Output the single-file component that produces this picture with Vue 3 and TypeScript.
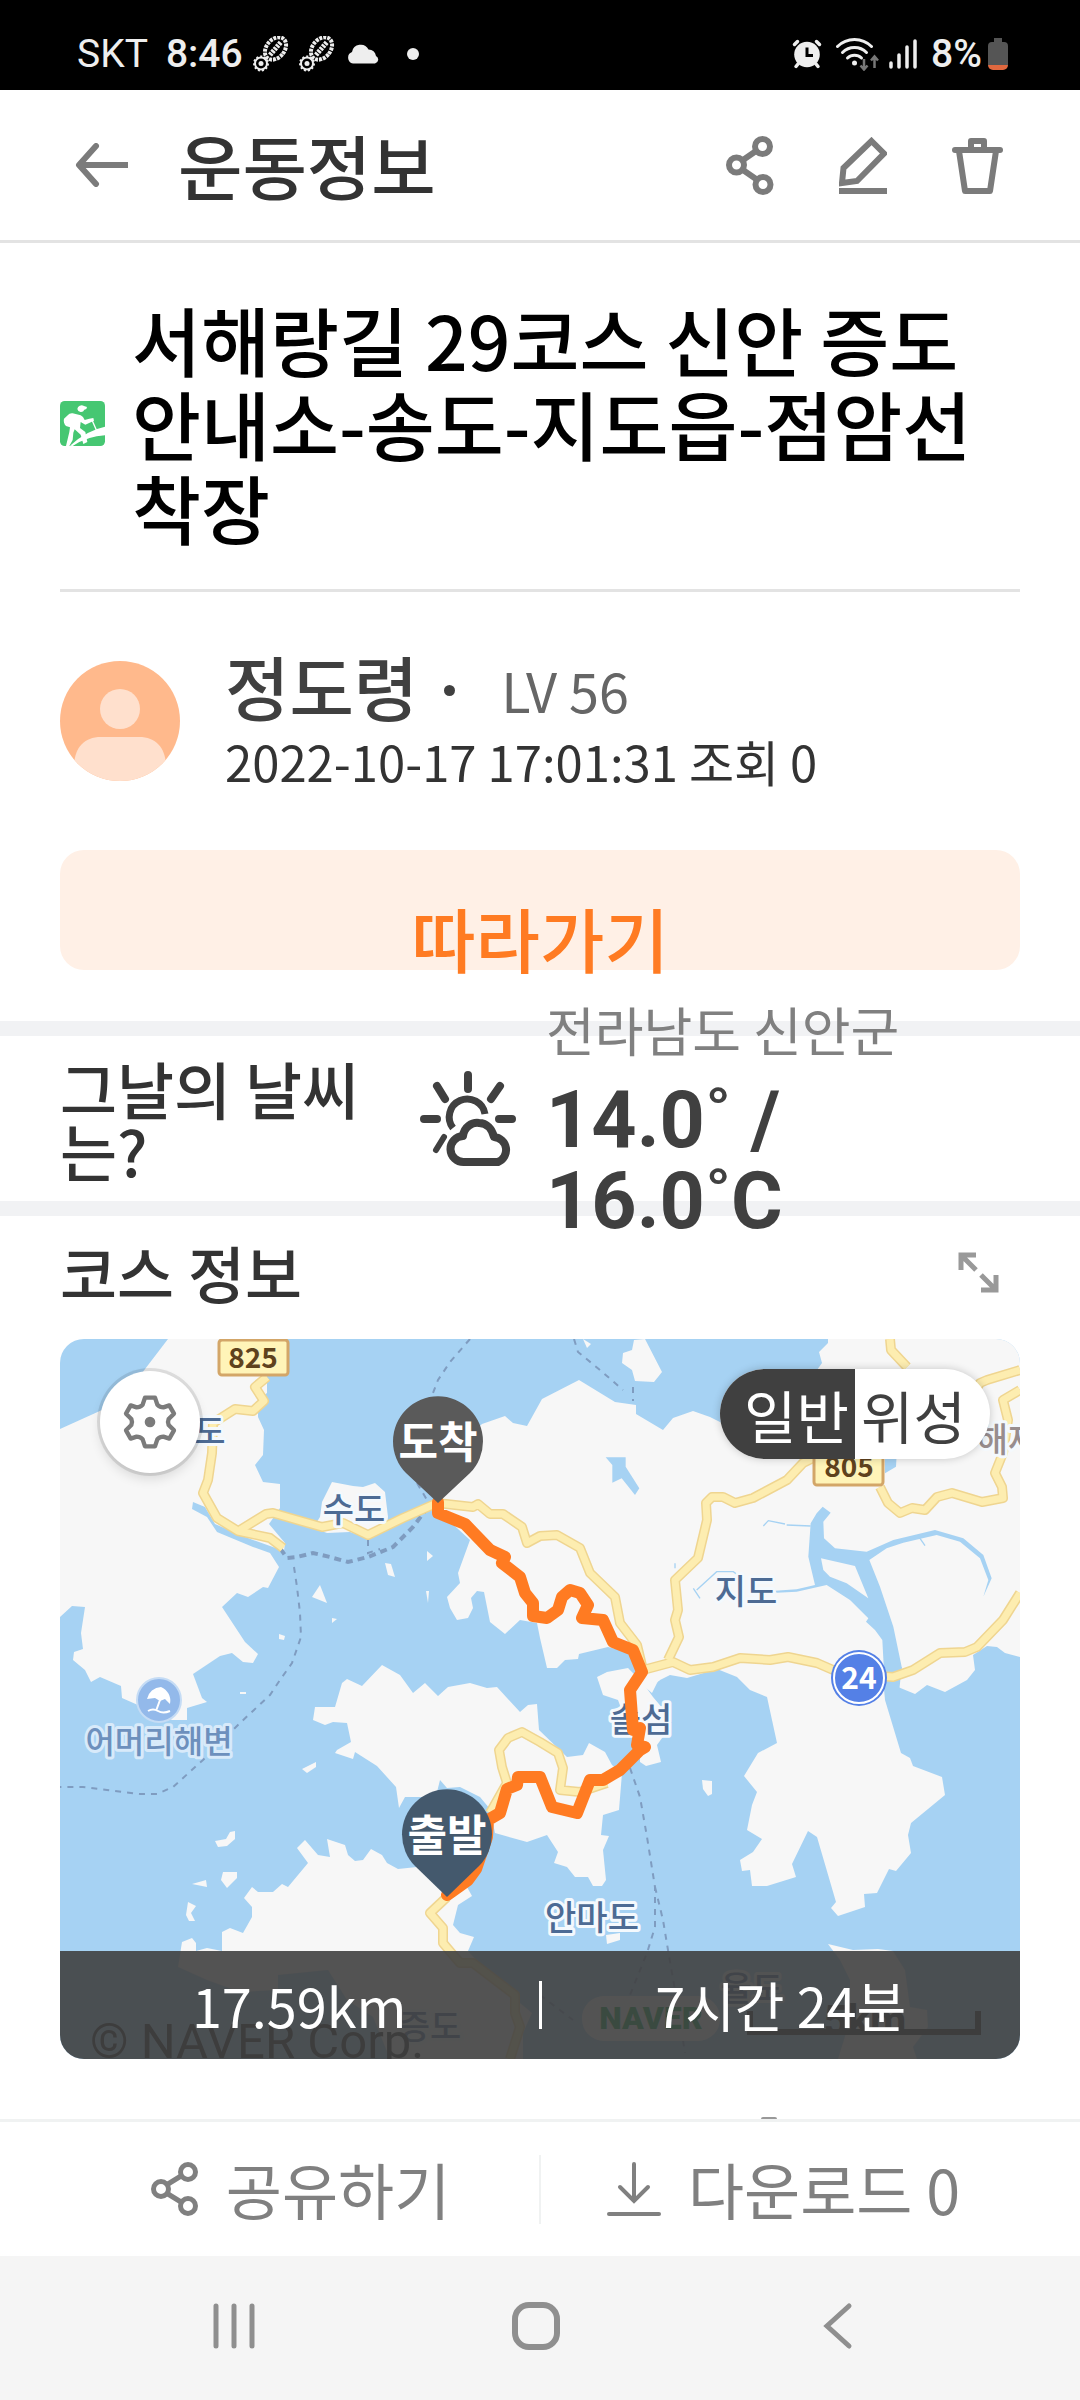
<script setup lang="ts">
import { ref } from 'vue'

interface MapLabel {
  text: string
  x: number
  y: number
  kind?: string
}

const mapMode = ref<'normal' | 'satellite'>('normal')

const land: string[] = [
  '108,0 207,0 207,54 198,61 198,78 204,91 203,116 195,126 203,143 220,145 220,169 209,185 225,204 224,212 193,201 178,195 155,185 145,168 133,163 132,170 147,178 157,193 193,208 210,214 219,228 208,249 203,248 188,258 177,254 162,268 185,303 198,315 193,324 183,323 172,314 160,317 133,335 142,359 147,363 127,369 127,381 112,381 62,359 61,347 40,338 31,343 25,331 13,321 14,313 23,310 21,294 25,268 12,267 0,278 0,90 42,71 82,34',
  '272,143 293,147 303,148 315,144 325,153 328,178 327,185 308,199 290,193 267,194 253,189 260,178 262,163',
  '574,1 585,0 602,33 594,43 575,42 572,31 562,24 563,14 572,11',
  '523,0 531,5 527,9',
  '960,0 768,0 768,4 759,13 762,24 757,31 662,84 650,78 633,72 613,79 603,91 576,75 576,66 555,63 519,41 482,60 467,87 453,84 445,77 422,85 395,110 378,163 385,178 410,201 398,234 400,244 387,258 390,269 397,281 408,279 413,269 411,259 417,252 424,253 430,283 445,295 460,281 477,284 480,299 487,329 497,329 505,321 518,320 519,315 548,308 572,314 580,344 592,354 598,342 610,336 627,339 657,330 677,338 690,351 707,358 717,404 698,414 684,437 697,453 692,466 687,491 702,500 693,513 680,521 682,532 690,531 692,547 707,547 736,538 732,525 748,492 757,498 776,563 771,569 778,577 805,568 804,555 817,554 829,530 836,532 851,514 848,496 851,484 885,456 882,438 853,427 850,419 841,414 825,361 822,328 842,328 838,348 855,355 867,346 885,353 907,341 915,331 913,316 927,307 937,308 945,314 960,318',
  '537,338 547,333 568,329 583,344 593,358 604,371 610,388 597,406 601,423 586,427 580,423 580,411 568,388 558,361 543,356',
  '590,341 600,341 595,345',
  '282,344 287,340 302,347 322,326 340,336 353,354 365,344 378,357 388,348 410,344 427,349 437,348 460,373 468,366 477,365 479,391 507,418 523,416 529,404 545,413 552,426 562,434 559,471 543,476 541,496 549,497 543,511 546,541 542,547 533,547 528,538 515,538 507,528 494,524 498,513 487,496 467,503 435,494 430,470 420,458 400,448 387,449 380,441 377,453 368,458 345,458 339,469 336,448 317,427 295,413 293,420 275,414 277,411 291,403 287,384 273,383 265,386 253,381 255,368 275,368',
  '237,509 245,501 258,516 270,518 267,500 285,506 288,516 295,522 303,521 311,510 322,516 327,524 338,530 357,528 380,541 407,548 412,557 398,566 393,586 400,594 414,598 408,612 420,625 453,658 472,674 463,694 463,720 330,720 313,678 287,661 268,631 218,636 218,651 180,653 147,641 118,628 122,603 132,599 136,604 136,612 147,609 162,612 162,593 170,589 183,594 192,578 192,568 184,559 192,548 198,553 213,553 222,545 228,548 248,524',
  '768,605 793,611 818,610 833,612 845,631 850,668 867,671 868,688 853,708 857,720 778,720 790,681 790,641 780,621',
  '155,502 166,500 170,493 175,492 175,500 167,507 158,508',
  '163,533 177,533 177,539 167,549 161,541',
  '132,545 146,541 147,548',
  '128,563 136,567 131,574 135,582 129,582 126,576',
  '242,430 256,423 256,428 247,434',
  '325,224 331,225 335,238 328,236',
  '260,246 267,264 252,258',
  '272,279 277,280 272,284',
  '219,295 225,297 224,301 219,300',
  '367,212 373,217 367,222',
  '642,441 652,442 652,455 648,457 643,450',
  '546,596 560,594 560,601 547,605',
  '180,353 186,353 186,355 180,355',
  '366,252 369,252 368,264',
]

const roads: string[] = [
  '207,38 195,48 204,62 193,72 175,70 153,84 152,114 148,141 143,154 157,179 178,192 210,199 223,209',
  '180,191 206,175 213,174 262,188 283,184 308,196 343,179 377,164 413,168 418,165 430,175 443,175 462,188 467,204 480,197 497,196 520,209 530,234 555,258 560,284 577,306 583,331 613,323 630,331 653,328 680,319 710,321 728,318 757,324 780,334 833,338 853,331 880,314 905,313 917,308 943,281 960,254',
  '608,321 619,298 615,281 618,271 615,241 638,219 647,181 646,164 652,158 663,158 675,164 693,159 727,141 743,124 763,114',
  '820,148 828,164 840,174 852,169 865,171 877,158 892,154 922,163 943,159 942,148 935,134 943,114 948,81 943,61 960,51',
  '830,0 831,11 847,28',
  '910,60 920,44 927,41 960,31',
  '430,474 447,444 442,428 439,411 448,399 462,393 480,403 498,414 503,429 500,451 520,453 547,444',
  '387,558 370,574 383,589 383,604 400,624 413,624 455,656 455,674 460,688 450,720',
]

const ferries: string[] = [
  '410,0 390,23 378,41 373,54',
  '357,144 367,161 372,164',
  '234,228 237,248 240,274 241,298 232,324 220,341 210,356 180,384 143,421 113,448 97,455 80,455 47,451 23,448 0,448',
  '514,0 518,13 540,31 563,51',
  '573,48 573,62',
  '308,201 308,214 320,210',
  '570,429 580,458 587,498 595,548 595,588 587,614 570,656',
  '595,548 603,581 608,611 615,651 625,714',
  '480,656 513,681',
]

const route =
  '378,163 378,174 405,185 430,211 445,218 442,224 460,238 465,254 473,264 473,277 487,279 498,271 502,258 510,251 520,254 528,266 522,279 543,281 553,303 573,311 582,333 570,351 573,391 580,389 577,406 585,408 580,411 560,431 543,441 530,441 517,474 492,468 480,438 458,438 457,446 447,450 440,474 428,481 427,498 416,530 408,541 387,556'

const labels: MapLabel[] = [
  { text: '도', x: 150, y: 105 },
  { text: '수도', x: 294, y: 183 },
  { text: '지도', x: 686, y: 265 },
  { text: '솔섬', x: 581, y: 393 },
  { text: '안마도', x: 532, y: 591 },
  { text: '증도', x: 370, y: 700 },
  { text: '율도', x: 692, y: 662 },
  { text: '해제', x: 948, y: 113, kind: 'town' },
  { text: '어머리해변', x: 99, y: 414, kind: 'beach' },
]
</script>

<template>
  <div class="page">
    <div class="status">
      <span class="carrier">SKT</span>
      <span class="clock">8:46</span>
      <svg v-for="n in 2" :key="n" class="foot" width="36" height="36" viewBox="0 0 36 36">
        <g fill="none" stroke="#eee">
          <ellipse cx="22.500" cy="12.500" rx="9" ry="12.500" transform="rotate(40 22.500 12.500)" stroke-width="4" stroke-dasharray="3 1" />
          <path d="M17 19L28 6" stroke-width="5" stroke-dasharray="2.500 1" />
          <circle cx="8" cy="27.500" r="6" stroke-width="2" />
          <circle cx="8" cy="27.500" r="7" stroke-width="2" stroke-dasharray="2 2" />
        </g>
        <circle cx="8" cy="27.500" r="2.500" fill="#eee" />
      </svg>
      <svg class="cloud" width="32" height="20" viewBox="0 0 32 20">
        <path d="M6 19.500a6 6 0 0 1-1-11.500 8.800 8.800 0 0 1 16.500-2.500A8 8 0 0 1 29 12a4 4 0 0 1-1 7.500z" fill="#eee" />
      </svg>
      <span class="dot"></span>
      <span class="grow"></span>
      <svg class="alarm" width="30" height="30" viewBox="0 0 30 30">
        <circle cx="15" cy="15.500" r="12.800" fill="#eee" />
        <g stroke="#eee" stroke-width="3.500" stroke-linecap="round">
          <path d="M2.500 5.500l3-3M27.500 5.500l-3-3M6 25l-2 2.500M24 25l2 2.500" />
        </g>
        <path d="M15 8.500v8h6" fill="none" stroke="#000" stroke-width="3" />
      </svg>
      <svg class="wifi" width="44" height="34" viewBox="0 0 44 34">
        <g fill="none" stroke="#eee" stroke-width="3" stroke-linecap="round">
          <path d="M1.500 9.500a24 24 0 0 1 34 0" />
          <path d="M6.500 15.500a17 17 0 0 1 24 0" />
          <path d="M11.500 21a10 10 0 0 1 14 0" />
        </g>
        <circle cx="18.500" cy="26" r="2.500" fill="#eee" />
        <path d="M28 22v10M24.500 28.500l3.500 4 3.500-4M38.500 31V20M35 23.500l3.500-4 3.500 4" fill="none" stroke="#777" stroke-width="2.500" />
      </svg>
      <svg class="signal" width="28" height="30" viewBox="0 0 28 30">
        <path d="M2 24v4M10 16v12M18 8v20M26 2v26" stroke="#eee" stroke-width="3.500" stroke-linecap="round" />
      </svg>
      <span class="percent">8%</span>
      <svg class="battery" width="20" height="32" viewBox="0 0 20 32">
        <path d="M6 0h8v4h2a4 4 0 0 1 4 4v19H0V8a4 4 0 0 1 4-4h2z" fill="#555" />
        <path d="M0 27h20a5 5 0 0 1-5 5H5a5 5 0 0 1-5-5z" fill="#e0683f" />
      </svg>
    </div>

    <header class="bar">
      <button class="icon-button" type="button" aria-label="뒤로">
        <svg width="53" height="44" viewBox="0 0 53 44" fill="none" stroke="#7b7b7b" stroke-width="6">
          <path d="M21 3L4 22l17 19" stroke-linecap="round" stroke-linejoin="round" />
          <path d="M4 22h49" />
        </svg>
      </button>
      <h1>운동정보</h1>
      <button class="icon-button" type="button" aria-label="공유">
        <svg width="48" height="59" viewBox="0 0 48 59" fill="none" stroke="#7b7b7b" stroke-width="6">
          <circle cx="36.500" cy="10.500" r="7.500" />
          <circle cx="10.500" cy="29" r="7.500" />
          <circle cx="37" cy="48.500" r="7.500" />
          <path d="M17 24l13-9M17 34l13 9" />
        </svg>
      </button>
      <button class="icon-button edit" type="button" aria-label="수정">
        <svg width="48" height="57" viewBox="0 0 48 57" fill="none" stroke="#7b7b7b" stroke-width="6">
          <path d="M32.500 4L45 16.500 18 44l-15 2 1.500-15z" />
          <path d="M0 54h48" />
        </svg>
      </button>
      <button class="icon-button trash" type="button" aria-label="삭제">
        <svg width="51" height="57" viewBox="0 0 51 57" fill="none" stroke="#7b7b7b" stroke-width="6" stroke-linejoin="round">
          <path d="M3 13h45" stroke-linecap="round" />
          <path d="M19 12V4h13v8" />
          <path d="M7 14l6 40h25l6-40" />
        </svg>
      </button>
    </header>

    <main>
      <section class="summary">
        <div class="course-title">
          <svg class="hike" width="45" height="45" viewBox="0 0 135 135">
            <rect width="135" height="135" rx="14" fill="#46c772" />
            <g fill="#fff">
              <path d="M52 24a13 12 0 0 1 20-9l9 3-2 6-6 2a11 11 0 0 1-21-2z" />
              <path d="M24 42q4-6 14-5l24 6q8 3 12 14l14-4 12-2 2 8-26 12-14-8-2 18 16 12 6 30-12 6-8-28-18-16-4 10-2 22-10 18h-10l10-42 2-14-12-4q-9-10-6-22z" />
              <path d="M30 134q50-46 105-57v26q-50 2-97 32z" />
            </g>
            <path d="M95 55l15 34" stroke="#fff" stroke-width="4" />
          </svg>
          <h2>서해랑길 29코스 신안 증도 안내소-송도-지도읍-점암선착장</h2>
        </div>
        <div class="author">
          <svg class="avatar" width="120" height="120" viewBox="0 0 120 120">
            <clipPath id="avatar-clip"><circle cx="60" cy="60" r="60" /></clipPath>
            <g clip-path="url(#avatar-clip)">
              <rect width="120" height="120" fill="#ffb98c" />
              <circle cx="60" cy="48" r="20" fill="#ffe0cd" />
              <path d="M14 106c0-18 9-30 27-30h38c18 0 27 12 27 30v14H14z" fill="#ffe0cd" />
            </g>
          </svg>
          <div class="author-text">
            <div class="author-line"><strong>정도령</strong><i></i><span>LV 56</span></div>
            <div class="date">2022-10-17 17:01:31 조회 0</div>
          </div>
        </div>
        <button class="follow" type="button">따라가기</button>
      </section>

      <section class="weather">
        <h3>그날의 날씨는?</h3>
        <svg class="sun" width="96" height="96" viewBox="0 0 96 96" fill="none" stroke="#404040" stroke-width="8" stroke-linecap="round" stroke-linejoin="round">
          <path d="M48 4v14M17 15l8 13M80 15l-9 13M4 48h13M79 48h13" />
          <path d="M24 66l-8 13" stroke-width="6" />
          <path d="M33 57A18 18 0 1 1 65 43" stroke-width="7" stroke-linecap="butt" />
          <path d="M44 91a13 13 0 0 1-1-26c1-9 9-14 16-13 8 0 13 6 15 14a13 13 0 0 1 4 25z" stroke-width="8" />
        </svg>
        <div class="forecast">
          <div class="region">전라남도 신안군</div>
          <div class="temp"><span>14.0˚ /</span><span>16.0˚C</span></div>
        </div>
      </section>

      <section class="course">
        <div class="course-head">
          <h3>코스 정보</h3>
          <button class="icon-button" type="button" aria-label="지도 확대">
            <svg width="42" height="42" viewBox="0 0 42 42" fill="none" stroke="#999" stroke-width="5">
              <path d="M4 19V4h15M4 4l15 15M39 24v15H24M39 39L24 24" />
            </svg>
          </button>
        </div>

        <div class="map">
          <svg class="tiles" viewBox="0 0 960 720" preserveAspectRatio="xMidYMid slice">
            <rect width="960" height="720" fill="#a6d2f3" />
            <polygon v-for="(p, i) in land" :key="'l' + i" :points="p" fill="#f7f7f7" />
            <g transform="translate(480 -19) scale(.33333)" fill="#a6d2f3">
              <path d="M848 560L872 578 850 605 852 655 885 685 980 695 1060 660 1185 630 1270 655 1330 705 1355 775 1330 830 1345 780 1320 715 1260 665 1190 645 1090 668 1040 685 988 720 1020 800 1060 920 1085 1040 1078 1110 1035 1110 1027 960 1005 930 978 905 985 895 930 840 860 795 770 815 710 818 705 812 770 808 825 795 805 710 812 610 830 580z" />
              <path d="M843 715L945 738 985 835 920 790 870 770 850 750z" fill="#f7f7f7" />
              <path d="M197 412L257 412 257 440 298 505 285 525 245 475 217 488 217 435zM1035 405L1070 405 1068 440 1035 460z" />
              <path d="M812 618L740 615M735 612L685 602 670 618M1140 655L1155 677M405 730V745M480 835L460 805M470 810L530 755H580L600 770" fill="none" stroke="#a6d2f3" stroke-width="4" />
            </g>
            <g fill="none" stroke="#7f9cc0" stroke-width="2" stroke-dasharray="6 6">
              <polyline v-for="(p, i) in ferries" :key="'f' + i" :points="p" />
              <polyline points="368,168 353,188 333,208 308,218 288,223 270,218 253,214 237,218 227,219 220,209" stroke-width="4" stroke-dasharray="7 5" />
            </g>
            <g fill="none" stroke-linejoin="round">
              <polyline v-for="(p, i) in roads" :key="'b' + i" :points="p" stroke="#efd590" stroke-width="10" />
              <polyline v-for="(p, i) in roads" :key="'r' + i" :points="p" stroke="#fdedb0" stroke-width="7" />
            </g>
            <text v-for="l in labels" :key="l.text" class="place" :class="l.kind" :x="l.x" :y="l.y">{{ l.text }}</text>
            <g class="shield">
              <rect x="159" y="1" width="69" height="35" rx="3" />
              <text x="193" y="29">825</text>
              <rect x="754" y="111" width="69" height="35" rx="3" />
              <text x="789" y="138">805</text>
            </g>
            <circle cx="799" cy="339" r="28" fill="#5480e6" />
            <circle cx="799" cy="339" r="25" fill="none" stroke="#fff" stroke-width="2" />
            <text class="highway" x="799" y="350">24</text>
            <circle cx="99" cy="361" r="22" fill="#93b9ea" stroke="#c5dcf5" stroke-width="2" />
            <g transform="translate(99 361)" fill="#fff">
              <path d="M-12-1A15 15 0 0 1 2-13a15 15 0 0 1 9 17L6-1 1 1-4-2z" />
              <path d="M1 0l-4 11M-11 11q5-3 10 0t12 0" fill="none" stroke="#fff" stroke-width="2" />
            </g>
            <polyline :points="route" fill="none" stroke="#ff7b22" stroke-width="12" stroke-linejoin="round" stroke-linecap="round" />
            <path d="M378 164L346 134A45 45 0 1 1 410 134z" fill="#5a5a5a" />
            <text class="pin" x="378" y="119">도착</text>
            <path d="M387 558L355 527A45 45 0 1 1 419 527z" fill="#44596d" />
            <text class="pin" x="387" y="512">출발</text>
            <text class="copyright" x="30" y="719">© NAVER Corp.</text>
            <rect x="522" y="657" width="138" height="45" rx="22" fill="#fff" />
            <text class="brand" x="591" y="690">NAVER</text>
            <path d="M690 672v21h228v-21" fill="none" stroke="#222" stroke-width="6" />
            <text class="scale" x="805" y="696">5km</text>
          </svg>
          <button class="settings" type="button" aria-label="지도 설정">
            <svg width="54" height="54" viewBox="-81 -81 162 162" fill="none" stroke="#7b7b7b" stroke-width="13" stroke-linejoin="round">
              <path d="M-15-73H15L22-52Q30-44 40-44L58-50 72-25 56-9Q52 0 56 9L72 25 58 50 40 44Q30 44 22 52L15 73H-15L-22 52Q-30 44-40 44L-58 50-72 25-56 9Q-52 0-56-9L-72-25-58-50-40-44Q-30-44-22-52z" />
              <circle r="16" fill="#7b7b7b" stroke="none" />
            </svg>
          </button>
          <div class="toggle">
            <button type="button" :class="{ on: mapMode === 'normal' }" :aria-pressed="mapMode === 'normal'" @click="mapMode = 'normal'">일반</button>
            <button type="button" :class="{ on: mapMode === 'satellite' }" :aria-pressed="mapMode === 'satellite'" @click="mapMode = 'satellite'">위성</button>
          </div>
          <div class="stats">
            <span>17.59km</span>
            <i></i>
            <span>7시간 24분</span>
          </div>
        </div>
      </section>
      <div class="more"><i></i></div>
    </main>

    <footer class="actions">
      <button type="button">
        <svg width="48" height="54" viewBox="0 0 48 54" fill="none" stroke="#808080" stroke-width="5">
          <circle cx="37" cy="10" r="7.500" />
          <circle cx="10" cy="27" r="7.500" />
          <circle cx="37" cy="44" r="7.500" />
          <path d="M17 22l13-8M17 32l13 8" />
        </svg>
        <span>공유하기</span>
      </button>
      <i></i>
      <button type="button">
        <svg width="54" height="54" viewBox="0 0 54 54" fill="none" stroke="#808080" stroke-width="4" stroke-linecap="round">
          <path d="M27 2v36M13 25l14 14 14-14" />
          <path d="M2 52h50" />
        </svg>
        <span>다운로드 0</span>
      </button>
    </footer>

    <nav class="system">
      <button class="icon-button" type="button" aria-label="최근 앱">
        <svg width="48" height="48" viewBox="0 0 48 48" stroke="#8f8f8f" stroke-width="5" stroke-linecap="round">
          <path d="M6 4v40M24 4v40M42 4v40" />
        </svg>
      </button>
      <button class="icon-button" type="button" aria-label="홈">
        <svg width="48" height="48" viewBox="0 0 48 48" fill="none" stroke="#8f8f8f" stroke-width="6">
          <rect x="3" y="3" width="42" height="42" rx="14" />
        </svg>
      </button>
      <button class="icon-button" type="button" aria-label="이전">
        <svg width="48" height="48" viewBox="0 0 48 48" fill="none" stroke="#8f8f8f" stroke-width="5" stroke-linecap="round">
          <path d="M35 4L13 24l22 20" />
        </svg>
      </button>
    </nav>
  </div>
</template>

<style>
body {
  background: #fff;
}
</style>

<style scoped>
* {
  box-sizing: border-box;
}

.page {
  display: flex;
  flex-direction: column;
  min-height: 100vh;
  font-family: 'Noto Sans CJK KR', 'Noto Sans', sans-serif;
  color: #333;
}

h1,
h2,
h3 {
  margin: 0;
}

svg {
  display: block;
  flex: none;
}

button {
  margin: 0;
  padding: 0;
  border: 0;
  background: none;
  color: inherit;
  font: inherit;
}

main {
  flex: 1;
  display: flex;
  flex-direction: column;
}

.status {
  display: flex;
  align-items: center;
  height: 90px;
  padding: 18px 72px 0 77px;
  background: #000;
  color: #eee;
  font: 500 39px/44px Roboto, sans-serif;
}

.carrier {
  margin-right: 18px;
  font-weight: 400;
}

.foot {
  margin-left: 10px;
}

.cloud {
  margin-left: 12px;
}

.dot {
  width: 12px;
  height: 12px;
  margin-left: 28px;
  border-radius: 50%;
  background: #eee;
}

.grow {
  flex: 1;
}

.wifi {
  margin-left: 14px;
}

.signal {
  margin-left: 9px;
}

.percent {
  margin: 0 6px 0 14px;
}

.bar {
  display: flex;
  align-items: center;
  height: 153px;
  padding: 0 77px 0 75px;
  border-bottom: 3px solid #e3e3e3;
}

.bar h1 {
  flex: 1;
  margin-left: 50px;
  font-size: 70px;
  font-weight: 500;
  line-height: 80px;
}

.edit,
.trash {
  margin-left: 65px;
}

.summary {
  padding: 0 60px 51px;
}

.course-title {
  display: flex;
  align-items: center;
  gap: 27px;
  padding: 54px 0 40px;
  border-bottom: 3px solid #e3e3e3;
}

.course-title h2 {
  flex: 1;
  color: #000;
  font-size: 75px;
  font-weight: 500;
  line-height: 84px;
}

.author {
  display: flex;
  align-items: center;
  gap: 45px;
  padding: 54px 0;
}

.author-line {
  display: flex;
  align-items: center;
  color: #404040;
  font-size: 70px;
  line-height: 80px;
}

.author-line strong {
  font-weight: 500;
}

.author-line i {
  width: 11px;
  height: 11px;
  margin: 8px 46px 0 26px;
  border-radius: 50%;
  background: #404040;
}

.author-line span {
  padding-top: 8px;
  color: #666;
  font-size: 54px;
  line-height: 72px;
}

.date {
  font-size: 49px;
  line-height: 70px;
}

.follow {
  display: block;
  width: 100%;
  height: 120px;
  padding-top: 56px;
  border-radius: 24px;
  background: #fff0e6;
  color: #ff7b22;
  font-size: 70px;
  font-weight: 500;
  line-height: 64px;
}

.weather {
  display: flex;
  align-items: center;
  height: 195px;
  padding: 0 60px;
  border: solid #f1f2f4;
  border-width: 15px 0;
}

.weather h3 {
  width: 320px;
  font-size: 62px;
  font-weight: 500;
  line-height: 62px;
}

.sun {
  margin: 0 30px 0 40px;
}

.forecast {
  flex: 1;
}

.region {
  margin-bottom: 18px;
  color: #808080;
  font-size: 53px;
  line-height: 66px;
}

.temp {
  color: #404040;
  font: 700 79px/81px Roboto, 'Noto Sans', sans-serif;
}

.temp span {
  display: block;
}

.course {
  padding: 0 60px;
}

.course-head {
  display: flex;
  align-items: center;
  justify-content: space-between;
  height: 112px;
  margin-bottom: 11px;
  padding-right: 21px;
}

.course-head h3 {
  font-size: 62px;
  font-weight: 500;
  line-height: 62px;
}

.map {
  position: relative;
  overflow: hidden;
  aspect-ratio: 4 / 3;
  border-radius: 24px;
}

.tiles {
  width: 100%;
  height: 100%;
}

.tiles text {
  text-anchor: middle;
}

.place {
  fill: #4d6b94;
  stroke: #f4f9fd;
  stroke-width: 6px;
  stroke-linejoin: round;
  paint-order: stroke;
  font-size: 34px;
  font-weight: 500;
}

.place.town {
  fill: #988d8d;
}

.place.beach {
  fill: #6d90bd;
  stroke: #d8eafa;
  font-size: 32px;
}

.shield rect {
  fill: #fff4b8;
  stroke: #d3a668;
  stroke-width: 3px;
}

.shield text {
  fill: #5f421d;
  font-size: 28px;
  font-weight: 700;
}

.tiles .highway {
  fill: #fff;
  font-size: 30px;
  font-weight: 700;
}

.tiles .pin {
  fill: #fff;
  font-size: 43px;
  font-weight: 700;
}

.tiles .copyright {
  fill: #222;
  font: 400 49px Roboto, sans-serif;
  text-anchor: start;
}

.tiles .brand {
  fill: #00a53c;
  font: 900 32px Roboto, sans-serif;
}

.tiles .scale {
  fill: #222;
  font: 700 42px Roboto, sans-serif;
}

.settings {
  position: absolute;
  top: 32px;
  left: 40px;
  display: flex;
  align-items: center;
  justify-content: center;
  width: 100px;
  height: 102px;
  border-radius: 50%;
  background: #fff;
  box-shadow: 0 0 0 3px rgba(0, 0, 0, 0.1), 0 6px 12px rgba(0, 0, 0, 0.12);
}

.toggle {
  position: absolute;
  top: 30px;
  right: 30px;
  display: flex;
  overflow: hidden;
  border-radius: 45px;
  background: #fff;
  box-shadow: 0 0 8px rgba(0, 0, 0, 0.2);
  color: #404040;
}

.toggle button {
  width: 135px;
  height: 90px;
  font-size: 57px;
  line-height: 88px;
}

.toggle button:first-child {
  padding-left: 18px;
}

.toggle button:last-child {
  padding-right: 18px;
}

.toggle .on {
  background: #404040;
  color: #fff;
}

.stats {
  position: absolute;
  right: 0;
  bottom: 0;
  left: 0;
  display: flex;
  align-items: center;
  height: 108px;
  background: rgba(64, 64, 64, 0.9);
  color: #fff;
  font-size: 54px;
  line-height: 64px;
}

.stats span {
  flex: 1;
  text-align: center;
}

.stats i {
  width: 3px;
  height: 48px;
  background: #fff;
}

.more {
  flex: 1;
  display: flex;
  align-items: flex-end;
  min-height: 60px;
}

.more i {
  width: 16px;
  height: 2px;
  margin-left: 70.5%;
  border-radius: 8px 8px 0 0;
  background: #999;
}

.actions {
  display: flex;
  align-items: center;
  height: 137px;
  border-top: 3px solid #f0f2f2;
  color: #808080;
  font-size: 61px;
  line-height: 72px;
}

.actions button {
  flex: 1 1 50%;
  display: flex;
  align-items: center;
  justify-content: center;
  gap: 27px;
}

.actions button:first-child {
  padding-left: 62px;
}

.actions button:last-child {
  padding-right: 54px;
}

.actions i {
  flex: none;
  width: 2px;
  height: 69px;
  background: #f0f2f2;
}

.system {
  display: flex;
  align-items: center;
  justify-content: space-between;
  height: 144px;
  padding: 0 218px 4px 210px;
  background: #f5f5f5;
}
</style>
